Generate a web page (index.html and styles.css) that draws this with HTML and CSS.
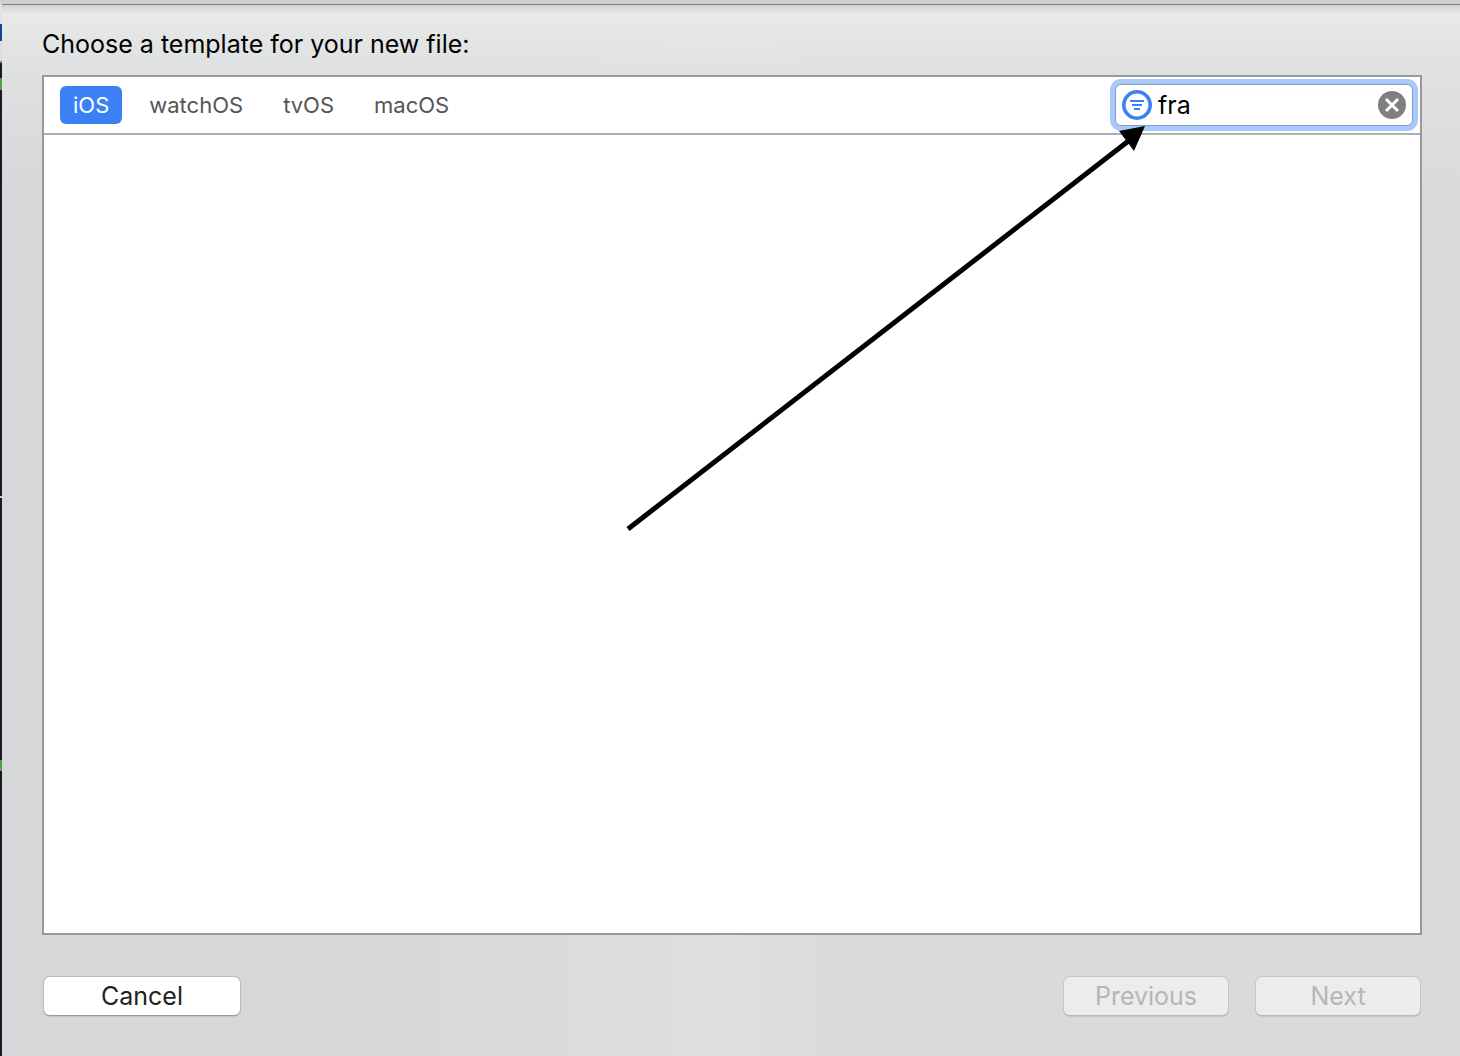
FILE: index.html
```html
<!DOCTYPE html>
<html lang="en">
<head>
    <meta charset="UTF-8">
    <meta name="viewport" content="width=device-width, initial-scale=1.0">
    <title>New File</title>
    <link rel="stylesheet" href="styles.css">
</head>
<body>

<!-- Template sheet -->
<main class="sheet">
    <h1>Choose a template for your new file:</h1>

    <section class="panel">
        <!-- Platform tabs and filter -->
        <div class="toolbar">
            <nav class="tabs">
                <button type="button" class="tab active">iOS</button>
                <button type="button" class="tab">watchOS</button>
                <button type="button" class="tab">tvOS</button>
                <button type="button" class="tab">macOS</button>
            </nav>
            <div class="search">
                <svg class="filter-icon" viewBox="0 0 30 30" aria-hidden="true">
                    <circle cx="15" cy="15" r="13.2" fill="#fff" stroke="#3b80f5" stroke-width="3.6"/>
                    <path d="M8 11h14M10 15h10M12 19h6" stroke="#3b80f5" stroke-width="2"/>
                </svg>
                <input type="text" value="fra" aria-label="Filter templates">
                <button type="button" class="clear-btn" aria-label="Clear filter">
                    <svg viewBox="0 0 28 28" aria-hidden="true">
                        <circle cx="14" cy="14" r="14" fill="#808080"/>
                        <path d="M8 8l12 12M20 8L8 20" stroke="#fff" stroke-width="3"/>
                    </svg>
                </button>
            </div>
        </div>

        <!-- Arrow pointing at the filter box -->
        <svg class="arrow" viewBox="0 0 520 406" aria-hidden="true">
            <path d="M2 403L505 13" stroke="#000" stroke-width="5"/>
            <path d="M519 0L493 5L508 25Z" fill="#000"/>
        </svg>
    </section>

    <!-- Buttons -->
    <footer class="buttons">
        <button type="button" class="btn cancel-btn">Cancel</button>
        <button type="button" class="btn" disabled>Previous</button>
        <button type="button" class="btn" disabled>Next</button>
    </footer>
</main>

</body>
</html>
```

FILE: styles.css
```css
/* Global Styles */
* {
    margin: 0;
    padding: 0;
    box-sizing: border-box;
}

body {
    min-height: 100vh;
    display: flex;
    padding: 4px 0 0 2px;
    font-family: Inter, sans-serif;
    /* editor window showing behind the sheet */
    background:
        linear-gradient(#e0e1e1 20px, #1c3f98 20px, #1c3f98 37px, #dcdcdc 37px, #dcdcdc 57px, #888 57px, #888 59px, transparent 59px, transparent 74px, #4f9e48 74px, #4f9e48 86px, transparent 86px, transparent 492px, #ccc 492px, #ccc 494px, transparent 494px, transparent 756px, #4f9e48 756px, #4f9e48 767px, transparent 767px) 0 4px / 2px 100% no-repeat,
        linear-gradient(#d0ced1, #d0ced1) 0 0 / 100% 4px no-repeat,
        #191922;
}

/* Sheet */
.sheet {
    flex: 1;
    display: flex;
    flex-direction: column;
    padding: 24px 38px 40px 40px;
    border-top: 1px solid #7d7b7e;
    background:
        linear-gradient(rgba(0, 0, 0, 0.1), transparent 9px),
        linear-gradient(#e9ebea, rgba(226, 227, 228, 0.8) 60px, rgba(216, 217, 219, 0) 190px),
        linear-gradient(90deg, #d6d7d9, #d7d7d8 22%, #d9dadb 35%, #dedfe1 50%, #dadadc 58%, #d8dadb 68%, #d9dadc);
}

h1 {
    font-size: 25px;
    font-weight: 400;
    line-height: 30px;
    margin-bottom: 16px;
    color: #000;
}

/* Template panel */
.panel {
    flex: 1;
    position: relative;
    background-color: #fff;
    border: 2px solid #999;
}

.toolbar {
    display: flex;
    justify-content: space-between;
    align-items: center;
    height: 58px;
    padding: 0 7px 0 16px;
    border-bottom: 2px solid #b0b0b0;
}

.tabs {
    display: flex;
    gap: 14px;
}

.tab {
    height: 38px;
    padding: 0 13px;
    border: none;
    border-radius: 6px;
    background: none;
    color: #555;
    font-family: inherit;
    font-size: 22px;
}

.tab.active {
    background-color: #3b80f5;
    color: #fff;
}

/* Filter box */
.search {
    display: flex;
    align-items: center;
    gap: 6px;
    width: 298px;
    height: 42px;
    padding: 0 6px;
    border: 1px solid #7f9bc6;
    border-radius: 6px;
    background-color: #fff;
    box-shadow: 0 0 0 5px #a9c9f8;
}

.filter-icon {
    width: 30px;
    height: 30px;
}

.search input {
    flex: 1;
    min-width: 0;
    border: none;
    outline: none;
    background: none;
    color: #000;
    font-family: inherit;
    font-size: 25px;
}

.clear-btn {
    width: 28px;
    height: 28px;
    border: none;
    background: none;
}

.clear-btn svg {
    display: block;
}

.arrow {
    position: absolute;
    top: 49px;
    right: 274px;
    width: 520px;
    height: 406px;
}

/* Buttons */
.buttons {
    display: flex;
    gap: 26px;
    padding: 41px 1px 0;
}

.btn {
    width: 166px;
    height: 40px;
    border: 1px solid #c6c7c8;
    border-bottom-color: #b8b9ba;
    border-radius: 7px;
    background-color: #ececec;
    box-shadow: 0 1px 1px rgba(0, 0, 0, 0.1);
    color: #b6b6b6;
    font-family: inherit;
    font-size: 25px;
}

.cancel-btn {
    width: 198px;
    margin-right: auto;
    border-color: #b8b9ba;
    border-bottom-color: #9c9d9e;
    background-color: #fff;
    color: #222;
}
```
